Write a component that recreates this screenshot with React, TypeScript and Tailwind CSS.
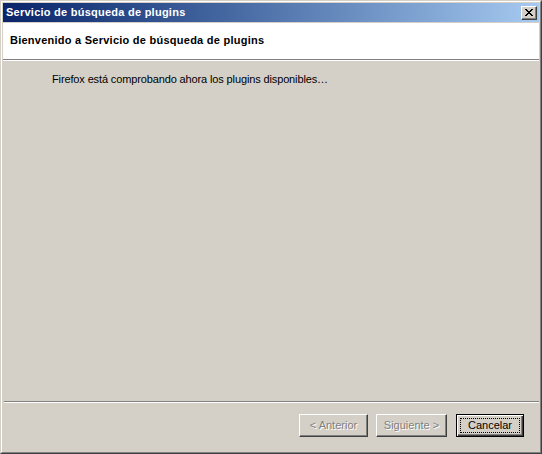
const font = { fontFamily: '"Liberation Sans", Arial, sans-serif' };

const CloseIcon = () => (
  <svg width="8" height="7" viewBox="0 0 8 7" shapeRendering="crispEdges" aria-hidden="true">
    <path
      d="M0 0h2v1H0zM6 0h2v1H6zM1 1h2v1H1zM5 1h2v1H5zM2 2h4v1H2zM3 3h2v1H3zM2 4h4v1H2zM1 5h2v1H1zM5 5h2v1H5zM0 6h2v1H0zM6 6h2v1H6z"
      fill="#000"
    />
  </svg>
);

const WizardButton = ({
  label,
  width,
  disabled,
  isDefault,
}: {
  label: string;
  width: string;
  disabled?: boolean;
  isDefault?: boolean;
}) => {
  if (isDefault) {
    return (
      <button
        className={`relative h-[23px] ${width} border border-black bg-[#d4d0c8] text-[11px] leading-[13px] text-black shadow-[inset_1px_1px_0_#ffffff,inset_-1px_-1px_0_#404040,inset_-2px_-2px_0_#808080]`}
      >
        <span className="pointer-events-none absolute inset-[3px] border border-dotted border-black" />
        {label}
      </button>
    );
  }
  return (
    <button
      disabled={disabled}
      className={`h-[23px] ${width} border border-t-white border-l-white border-r-[#404040] border-b-[#404040] bg-[#d4d0c8] text-[11px] leading-[13px] text-[#808080] shadow-[inset_-1px_-1px_0_#808080] [text-shadow:1px_1px_0_#ffffff]`}
    >
      {label}
    </button>
  );
};

export default function App() {
  return (
    <div style={font} className="h-[454px] w-[542px] select-none text-[11px] leading-[13px]">
      <div className="flex h-full w-full flex-col border border-t-[#d4d0c8] border-l-[#d4d0c8] border-r-[#404040] border-b-[#404040] bg-[#d4d0c8]">
        <div className="flex h-full w-full flex-col border border-t-white border-l-white border-r-[#808080] border-b-[#808080] p-px">
          {/* title bar */}
          <div className="flex h-[19px] shrink-0 items-center justify-between bg-linear-to-r from-[#0a246a] to-[#a6caf0] pl-[3px] pr-[2px]">
            <span className="font-bold tracking-[0.25px] text-white">Servicio de búsqueda de plugins</span>
            <button
              aria-label="Cerrar"
              className="flex h-[14px] w-[16px] items-center justify-center border border-t-white border-l-white border-r-[#404040] border-b-[#404040] bg-[#d4d0c8] shadow-[inset_-1px_-1px_0_#808080]"
            >
              <CloseIcon />
            </button>
          </div>

          {/* header */}
          <div className="mt-px h-[36px] shrink-0 bg-white pl-[7px] pt-[11px]">
            <span className="font-bold tracking-[0.25px] text-black">
              Bienvenido a Servicio de búsqueda de plugins
            </span>
          </div>
          <div className="h-px shrink-0 bg-[#808080]" />
          <div className="h-px shrink-0 bg-white" />

          {/* body */}
          <div className="flex-1 pl-[49px] pt-[12px] tracking-[-0.13px] text-black">
            Firefox está comprobando ahora los plugins disponibles…
          </div>

          <div className="ml-px h-px shrink-0 bg-[#808080]" />
          <div className="ml-px h-px shrink-0 bg-white" />

          {/* footer */}
          <div className="flex h-[48px] shrink-0 items-start justify-end pr-[15px] pt-[11px]">
            <WizardButton label="< Anterior" width="w-[69px]" disabled />
            <div className="w-[8px]" />
            <WizardButton label="Siguiente >" width="w-[71px]" disabled />
            <div className="w-[9px]" />
            <WizardButton label="Cancelar" width="w-[68px]" isDefault />
          </div>
        </div>
      </div>
    </div>
  );
}
